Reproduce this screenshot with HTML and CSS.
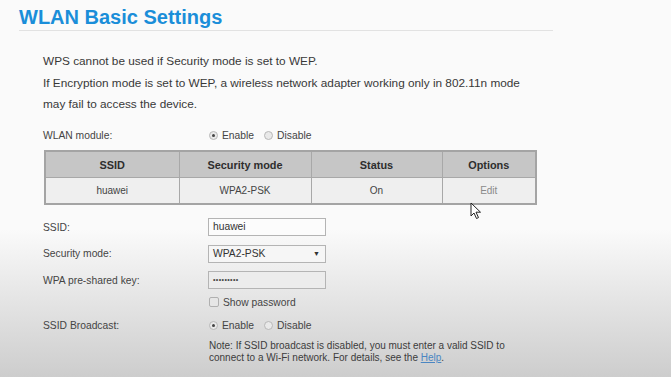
FILE: index.html
```html
<!DOCTYPE html>
<html lang="en">

<head>
	<meta charset="UTF-8">
	<meta name="viewport" content="width=device-width, initial-scale=1.0">
	<title>WLAN Basic Settings</title>
	<link rel="stylesheet" href="styles.css">
</head>

<body>
	<div class="page">
		<h1 class="title">WLAN Basic Settings</h1>

		<div class="intro">
			<p>WPS cannot be used if Security mode is set to WEP.</p>
			<p>If Encryption mode is set to WEP, a wireless network adapter working only in 802.11n mode</p>
			<p>may fail to access the device.</p>
		</div>

		<div class="row module-row">
			<label class="label">WLAN module:</label>
			<div class="value radios">
				<span class="radio checked"></span><span class="radio-text">Enable</span>
				<span class="radio"></span><span class="radio-text">Disable</span>
			</div>
		</div>

		<table class="ssid-table">
			<thead>
				<tr>
					<th class="col-ssid">SSID</th>
					<th class="col-mode">Security mode</th>
					<th class="col-status">Status</th>
					<th class="col-options">Options</th>
				</tr>
			</thead>
			<tbody>
				<tr>
					<td>huawei</td>
					<td>WPA2-PSK</td>
					<td>On</td>
					<td class="edit">Edit</td>
				</tr>
			</tbody>
		</table>

		<div class="form">
			<div class="row field-row first">
				<label class="label">SSID:</label>
				<div class="value"><div class="input">huawei</div></div>
			</div>
			<div class="row field-row">
				<label class="label">Security mode:</label>
				<div class="value">
					<div class="input select">WPA2-PSK<span class="arrow">&#9660;</span></div>
				</div>
			</div>
			<div class="row field-row">
				<label class="label">WPA pre-shared key:</label>
				<div class="value"><div class="input key">&bull;&bull;&bull;&bull;&bull;&bull;&bull;&bull;&bull;</div></div>
			</div>
			<div class="row check-row">
				<span class="label"></span>
				<div class="value radios">
					<span class="checkbox"></span><span class="radio-text">Show password</span>
				</div>
			</div>
			<div class="row broadcast-row">
				<label class="label">SSID Broadcast:</label>
				<div class="value radios">
					<span class="radio checked"></span><span class="radio-text">Enable</span>
					<span class="radio"></span><span class="radio-text">Disable</span>
				</div>
			</div>
			<div class="row note-row">
				<span class="label"></span>
				<div class="value note">Note: If SSID broadcast is disabled, you must enter a valid SSID to<br>connect to a Wi-Fi network. For details, see the <a href="#">Help</a>.</div>
			</div>
		</div>

		<svg class="cursor" width="12" height="18" viewBox="0 0 12 18">
			<path d="M1 1 L1 14 L4 11 L6.5 16.5 L8.5 15.6 L6 10.2 L10.5 10.2 Z" fill="#fff" stroke="#222" stroke-width="1" stroke-linejoin="round" />
		</svg>
	</div>
</body>

</html>
```

FILE: styles.css
```css
* {
	box-sizing: border-box;
}

html,
body {
	height: 100%;
}

body {
	margin: 0;
	font-family: 'Liberation Sans', Arial, sans-serif;
	color: #3a3a3a;
	background: linear-gradient(to bottom, #fafafa 0, #fafafa 230px, #cdcdcd 377px);
	background-color: #cdcdcd;
	overflow: hidden;
}

.page {
	position: relative;
	width: 553px;
	padding-left: 19px;
}

.title {
	margin: 0;
	padding-top: 5px;
	padding-bottom: 1px;
	font-size: 20px;
	line-height: 24px;
	font-weight: 700;
	color: #1a8ed9;
	border-bottom: 1px solid #e2e2e2;
}

.intro {
	margin-top: 20px;
	padding-left: 24px;
	font-size: 11.8px;
	line-height: 21.6px;
	color: #383838;
}

.intro p {
	margin: 0;
}

.row {
	display: flex;
	align-items: center;
	padding-left: 24px;
	font-size: 10.3px;
	color: #444;
}

.label {
	width: 165px;
	flex-shrink: 0;
}

.value {
	display: flex;
	align-items: center;
}

.module-row {
	margin-top: 10.2px;
	height: 20px;
}

.radios {
	padding-left: 1px;
}

.radio {
	width: 9px;
	height: 9px;
	border-radius: 50%;
	border: 1px solid #b8b8b8;
	background: #e9e9e9;
	position: relative;
}

.radio.checked::after {
	content: '';
	position: absolute;
	left: 2px;
	top: 2px;
	width: 3px;
	height: 3px;
	border-radius: 50%;
	background: #444;
}

.radio-text {
	margin-left: 4px;
	margin-right: 10px;
}

.ssid-table {
	margin-top: 4px;
	margin-left: 25px;
	width: 493px;
	border-collapse: collapse;
	border: 2px solid #a4a4a4;
	font-size: 10px;
	text-align: center;
}

.ssid-table th,
.ssid-table td {
	border: 1px solid #a8a8a8;
	padding: 0;
}

.ssid-table th {
	height: 27px;
	background: #c6c6c6;
	font-size: 10.9px;
	font-weight: 700;
	color: #2e2e2e;
}

.ssid-table td {
	height: 26px;
	background: #efefef;
	color: #444;
}

.col-ssid {
	width: 134px;
}

.col-mode {
	width: 132px;
}

.col-status {
	width: 131px;
}

.ssid-table .edit {
	color: #8a8a8a;
}

.form {
	margin-top: 9px;
}

.field-row {
	height: 26.5px;
}

.input {
	position: relative;
	width: 118px;
	height: 18px;
	border: 1px solid #b4b4b4;
	background: #fcfcfc;
	padding-left: 4px;
	font-size: 10.3px;
	line-height: 16px;
	color: #333;
}

.select {
	background: #f6f6f6;
}

.arrow {
	position: absolute;
	right: 5px;
	top: 0;
	font-size: 7px;
	color: #333;
}

.key {
	background: #ececec;
	font-size: 7px;
	letter-spacing: 0.4px;
	color: #444;
}

.checkbox {
	width: 10px;
	height: 10px;
	border: 1px solid #b0b0b0;
	border-radius: 2px;
	background: #e6e6e6;
}

.check-row {
	height: 18px;
}

.broadcast-row {
	height: 22px;
	margin-top: 3px;
}

.note-row {
	margin-top: 4px;
	align-items: flex-start;
}

.note {
	display: block;
	padding-left: 1px;
	font-size: 10px;
	line-height: 12px;
	color: #3c3c3c;
}

.note a {
	color: #4b86c2;
}

.cursor {
	position: absolute;
	left: 470px;
	top: 202px;
}
```
